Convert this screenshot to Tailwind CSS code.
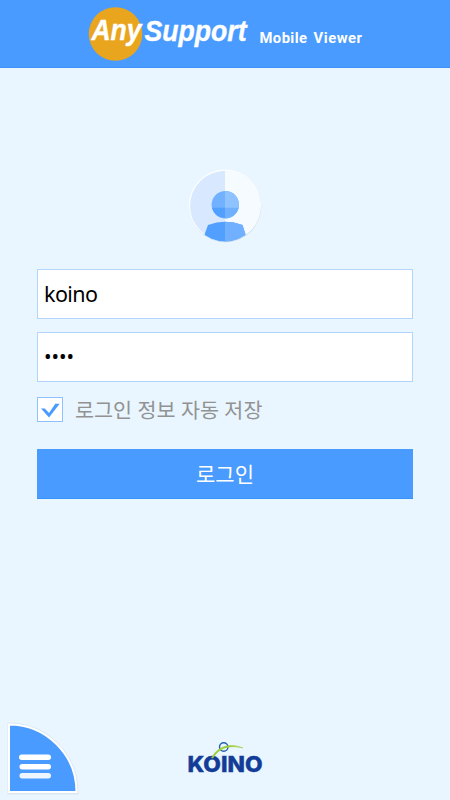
<!DOCTYPE html>
<html lang="ko">
<head>
  <meta charset="UTF-8">
  <meta name="viewport" content="width=device-width, initial-scale=1.0">
  <title>AnySupport Mobile Viewer</title>
  <script src="https://cdn.jsdelivr.net/npm/@tailwindcss/browser@4"></script>
</head>
<body class="bg-[#e9f6ff] h-screen flex flex-col overflow-hidden font-['Noto_Sans','Noto_Sans_CJK_KR',sans-serif]">
  <header class="h-[68px] shrink-0 bg-[#499bff] border-b border-[#3d91fa] flex justify-center">
    <svg class="w-[450px] h-[67px]" viewBox="0 0 450 67" fill="#fff" font-family="Liberation Sans, sans-serif" font-weight="bold">
      <circle cx="115.5" cy="34" r="26.8" fill="#e9a51d"/>
      <g font-style="italic" stroke="#fff" stroke-width=".4">
        <text x="91.5" y="39.7" font-size="29.5" textLength="50" lengthAdjust="spacingAndGlyphs">Any</text>
        <text x="144.5" y="41" font-size="30" textLength="102" lengthAdjust="spacingAndGlyphs">Support</text>
      </g>
      <g font-family="Roboto, sans-serif" font-size="14.8">
        <text x="259.5" y="43" textLength="47.5" lengthAdjust="spacing">Mobile</text>
        <text x="313.5" y="43" textLength="48.5" lengthAdjust="spacing">Viewer</text>
      </g>
    </svg>
  </header>

  <main class="flex-1 flex flex-col px-[37px] pt-[99px]">
    <svg class="w-[78px] h-[78px] self-center shrink-0" viewBox="186 167 78 78">
      <defs>
        <clipPath id="face"><circle cx="225" cy="206" r="35.5"/></clipPath>
        <clipPath id="right"><rect x="225" y="167" width="39" height="78"/></clipPath>
      </defs>
      <circle cx="225.3" cy="206.3" r="36" fill="#cddbe7"/>
      <circle cx="225" cy="205.6" r="36" fill="#fff"/>
      <circle cx="225" cy="205.8" r="35" fill="#d8e9ff"/>
      <circle cx="225" cy="205.8" r="35.2" fill="#f6fbff" clip-path="url(#right)"/>
      <circle cx="225.3" cy="204.7" r="13.7" fill="#71b1ff"/>
      <path d="M212 207.7h26.6a13.7 13.7 0 0 1-26.6 0z" fill="#519fff"/>
      <g clip-path="url(#right)">
        <circle cx="225.3" cy="204.7" r="13.7" fill="#8ec3ff"/>
        <path d="M212 207.7h26.6a13.7 13.7 0 0 1-26.6 0z" fill="#70b0ff"/>
      </g>
      <g clip-path="url(#face)">
        <path d="M204 236L208 225Q225 218.5 242.5 225L246 236V245H204z" fill="#519fff"/>
        <path d="M225 221.7Q234 221.8 242.5 225L246 236V245H225z" fill="#70b0ff"/>
      </g>
    </svg>

    <form class="mt-6 flex flex-col">
      <input type="text" value="koino" class="h-[50px] pl-1.5 pb-px bg-white border border-[#b3d4fb] text-[21.5px] tracking-[-0.6px] text-black outline-none">
      <input type="password" value="1234" class="mt-[13px] h-[50px] pl-1.5 pb-px bg-white border border-[#b3d4fb] text-[20px] text-black outline-none">
      <label class="mt-[15px] h-[25px] flex items-center gap-3 text-[20.7px] text-[#929292]">
        <svg class="w-[26px] h-[25px] shrink-0" viewBox="0 0 26 25" fill="none">
          <rect x=".5" y=".5" width="25" height="24" fill="#fff" stroke="#8fc0ff"/>
          <path d="M4 11.5H7.8L12 16L18.3 6.8H22.7L12 20.5z" fill="#499bff"/>
        </svg>
        <span class="whitespace-nowrap pt-0.5">로그인 정보 자동 저장</span>
      </label>
      <button type="button" class="mt-[27px] h-[50px] pt-0.5 bg-[#499bff] border-b border-[#3692fd] text-white text-[21px]">로그인</button>
    </form>
  </main>

  <footer class="relative h-[84px] shrink-0 flex justify-center">
    <button type="button" class="absolute left-0 top-0">
      <svg class="w-[84px] h-[84px]" viewBox="0 716 84 84">
        <path d="M8.5 723.5A69 69 0 0 1 77.5 792.5V793.5H8.5z" fill="none" stroke="#dce7f1" stroke-width="2"/>
        <path d="M9 724.5A67.5 67.5 0 0 1 76.5 792H9z" fill="#499bff" stroke="#fff" stroke-width="2"/>
        <g fill="#fff">
          <rect x="19" y="754.5" width="32" height="5.5" rx="2.7"/>
          <rect x="19.5" y="764" width="31.5" height="5.5" rx="2.7"/>
          <rect x="19.5" y="773" width="31.5" height="5.5" rx="2.7" fill="#edf6ff"/>
        </g>
      </svg>
    </button>
    <svg class="w-[90px] h-[45px] mt-[19px]" viewBox="180 735 90 45">
      <circle cx="223.7" cy="747" r="4.2" fill="none" stroke="#2461ae" stroke-width="1.4"/>
      <text x="187.5" y="771.5" font-family="Inter, sans-serif" font-weight="800" font-size="21" fill="#123c98" stroke="#123c98" stroke-width=".4" textLength="75" lengthAdjust="spacingAndGlyphs">KOINO</text>
      <path d="M211.5 758C217 747 229 742 243 748C229 744.5 219 748 213 758z" fill="#9dcc35" stroke="#9dcc35" stroke-width=".5"/>
    </svg>
  </footer>
</body>
</html>
